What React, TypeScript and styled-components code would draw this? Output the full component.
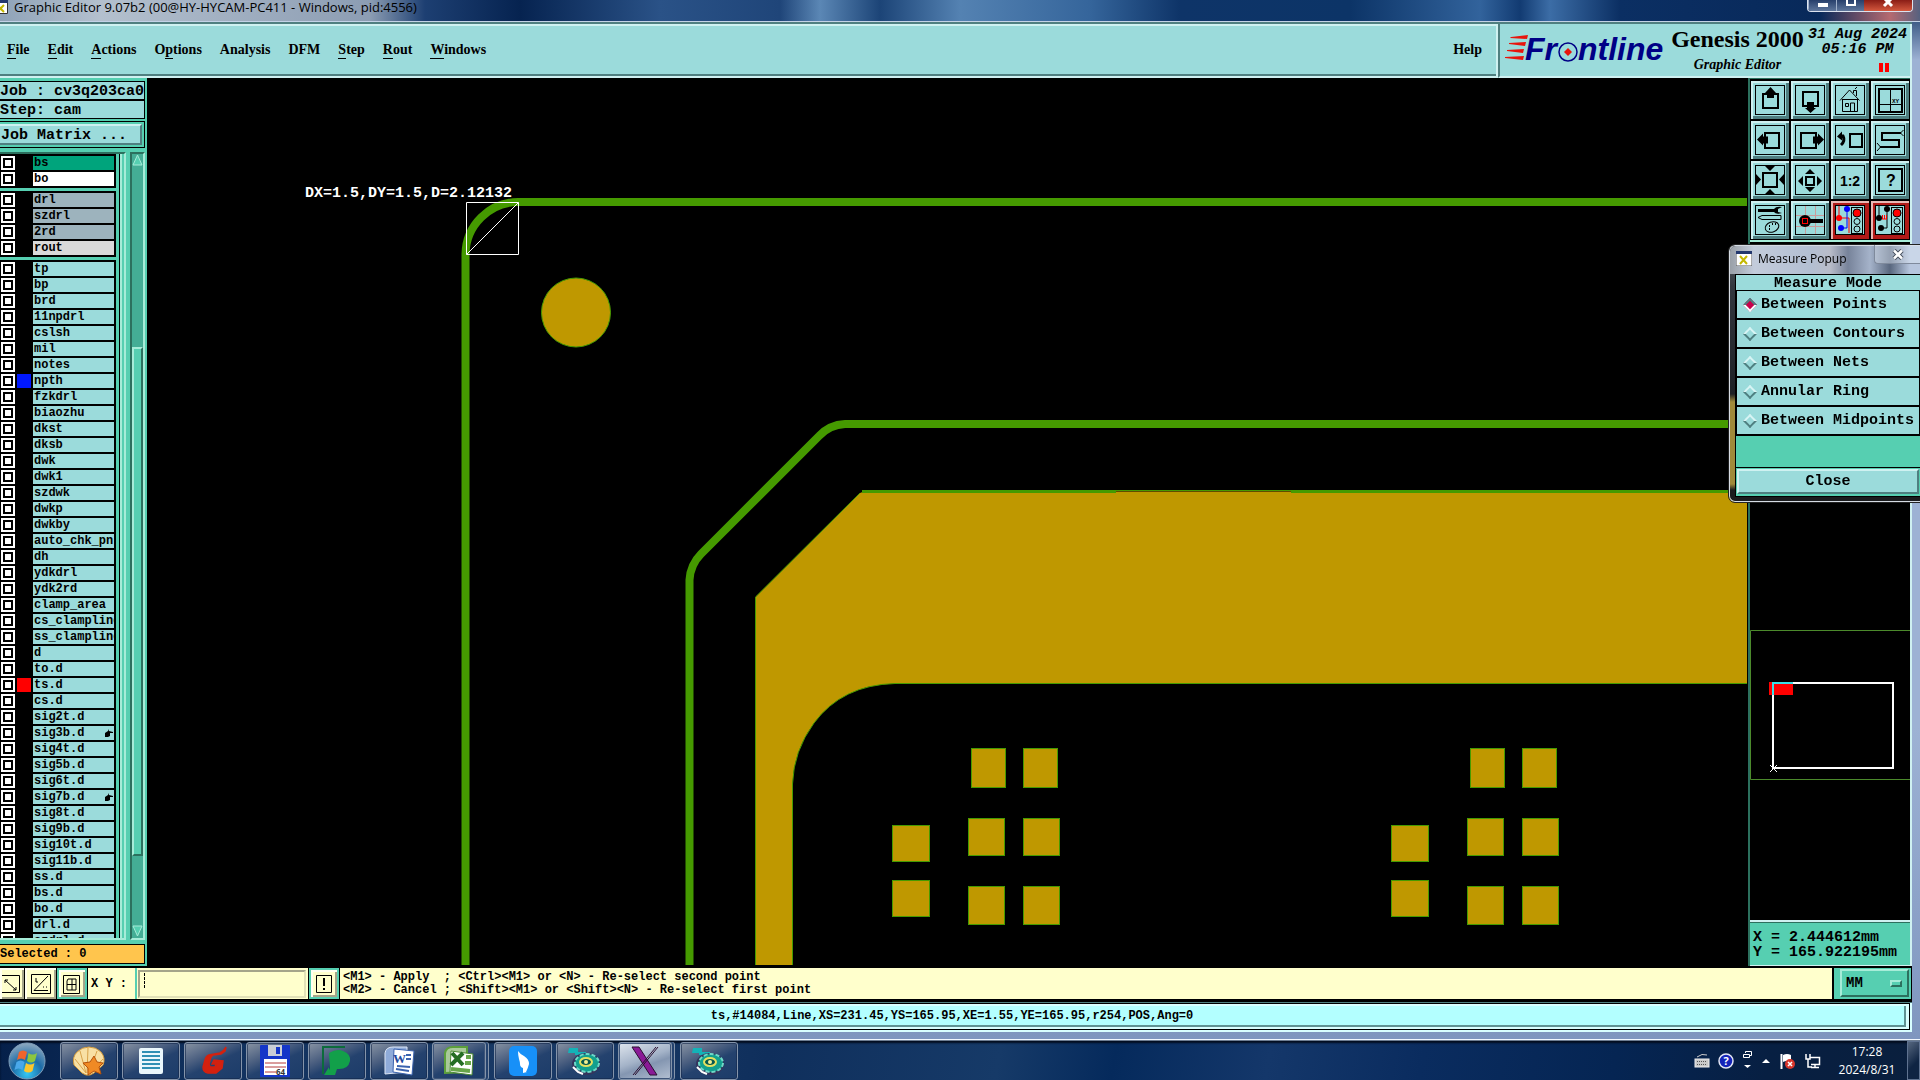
import React, { useState } from "react";
import styled, { createGlobalStyle, css } from "styled-components";

const MONO = '"Liberation Mono", "Courier New", monospace';
const SERIF = '"Liberation Serif", "Times New Roman", serif';
const UI = '"Open Sans", "Noto Sans", sans-serif';

const c = {
  teal: "#56cfb1",
  tealLight: "#a6ecd8",
  tealDark: "#2c705e",
  trough: "#44ad95",
  pale: "#9bdbdb",
  paleLight: "#cff1f1",
  paleDark: "#4f7f80",
  cream: "#ffffcc",
  creamDark: "#a5a58a",
  green: "#459a00",
  gold: "#bf9800",
  navy: "#000086",
};

const Global = createGlobalStyle`
  * { box-sizing: border-box; }
  body { margin: 0; background: #000; overflow: hidden; }
  button, input, select { font: inherit; color: inherit; margin: 0; padding: 0; border: 0; border-radius: 0; }
`;

const bevel = (light: string, dark: string, w = 2) => css`
  border-style: solid;
  border-width: ${w}px;
  border-color: ${light} ${dark} ${dark} ${light};
`;

const Screen = styled.div`
  display: flex;
  flex-direction: column;
  height: 100vh;
  color: #000;
  font: bold 15px/18px ${MONO};
`;

/* ---------- window frame ---------- */
const Frame = styled.div`
  flex: 1;
  min-height: 0;
  display: flex;
  flex-direction: column;
  padding: 0 8px 7px 0;
  background: linear-gradient(180deg, #0a2c5c 0, #9db2d4 60px, #9db2d4 70%, #7f96bf 100%);
  border-bottom: 1px solid #f2f8ff;
`;

const TitleBar = styled.header`
  height: 22px;
  margin-right: -8px;
  display: flex;
  align-items: flex-start;
  gap: 6px;
  border-bottom: 1px solid #c4d2e6;
  background: linear-gradient(90deg, #8fa3b8 0, #b4c0ce 100px, #8c9db3 370px, #1d3f72 425px, #062350 520px,
    #2a5287 660px, #1f4579 780px, #5b87b5 820px, #1c4477 880px, #5482b2 960px, #35659b 1090px, #0e3468 1180px,
    #0c3467 1350px, #32639c 1480px, #123b72 1520px, #3c6da6 1550px, #0b2f63 1620px, #08295a 1820px, #b56a70 1890px, #56617f 100%);
`;

const WindowTitle = styled.h1`
  flex: 1;
  margin: 0;
  font: 13px/14px ${UI};
`;

const Caption = styled.div`
  display: flex;
  height: 12px;
  margin-right: 7px;
  border: 1px solid #dbe3ef;
  border-top: 0;
  border-radius: 0 0 4px 4px;
  overflow: hidden;
`;

const CaptionButton = styled.button<{ $danger?: boolean }>`
  display: flex;
  justify-content: center;
  width: ${(p) => (p.$danger ? 48 : 28)}px;
  background: ${(p) => (p.$danger ? "linear-gradient(#8a1d16,#d4583e)" : "linear-gradient(#273f6b,#5e769c)")};
  border-left: ${(p) => (p.$danger ? 0 : 1)}px solid #9fb0cb;
`;

const Client = styled.main`
  flex: 1;
  min-height: 0;
  display: flex;
  flex-direction: column;
  background: #000;
`;

/* ---------- menu ---------- */
const TopRow = styled.div`
  display: flex;
  height: 56px;
  background: ${c.paleDark};
  padding-top: 2px;
`;

const MenuBar = styled.nav`
  flex: 1;
  display: flex;
  align-items: center;
  gap: 18px;
  padding: 0 14px 2px 7px;
  background: ${c.pale};
  border-bottom: 2px solid ${c.paleLight};
  border-top: 2px solid ${c.paleLight};
  border-right: 2px solid ${c.paleDark};
  box-shadow: inset 0 -2px 0 ${c.paleDark};
  font: bold 14px/18px ${SERIF};
`;

const MenuItem = styled.button<{ $end?: boolean }>`
  background: none;
  white-space: nowrap;
  margin-left: ${(p) => (p.$end ? "auto" : 0)};
  u { text-decoration: none; border-bottom: 1px solid #000; padding-bottom: 1px; }
`;

const Brand = styled.section`
  width: 414px;
  display: flex;
  justify-content: space-between;
  padding: 0 3px 0 5px;
  background: ${c.pale};
  border-style: solid;
  border-width: 0 2px 2px;
  border-color: ${c.paleDark} ${c.paleLight} ${c.paleLight} ${c.paleDark};
  box-shadow: -2px 0 0 ${c.paleLight};
`;

const BrandText = styled.div`
  text-align: center;
  font: bold italic 14px/22px ${SERIF};
  white-space: nowrap;
`;

const Product = styled.div`
  font: bold 24px/30px ${SERIF};
`;

const Clock = styled.div`
  padding-top: 3px;
  text-align: center;
  font: italic bold 15px/15px ${MONO};
  white-space: nowrap;
`;

const Pause = styled.div`
  width: 10px;
  height: 9px;
  margin: 6px 18px 0 auto;
  border: solid #ff0000;
  border-width: 0 4px;
`;

/* ---------- layer panel ---------- */
const Work = styled.div`
  flex: 1;
  min-height: 0;
  display: flex;
`;

const LayerPanel = styled.aside`
  width: 147px;
  display: flex;
  flex-direction: column;
  background: ${c.teal};
  padding: 3px 2px 2px 0;
`;

const Info = styled.div`
  height: 19px;
  border: 1px solid #000;
  border-left: 0;
  background: ${c.pale};
  line-height: 19px;
  white-space: pre;
`;

const MatrixBox = styled.div`
  margin: 2px 0 4px;
  padding: 2px 2px 2px 0;
  border: 1px solid #000;
  border-left: 0;
`;

const MatrixButton = styled.button`
  display: block;
  width: 100%;
  height: 21px;
  text-align: left;
  background: ${c.pale};
  padding: 1px 0 0 1px;
  ${bevel(c.paleLight, c.paleDark)}
  border-left: 0;
`;

const ListArea = styled.div`
  flex: 1;
  min-height: 0;
  display: flex;
`;

const ListScroll = styled.div`
  width: 126px;
  overflow: hidden;
  border-top: 2px solid ${c.tealDark};
  border-bottom: 2px solid ${c.tealLight};
  border-right: 2px solid ${c.tealLight};
  margin-right: 4px;
`;

const ListBody = styled.div`
  width: 122px;
  padding-right: 2px;
  border-right: 2px solid ${c.tealLight};
  box-shadow: inset -1px 0 0 #000;
`;

const Group = styled.ul`
  list-style: none;
  margin: 0 0 3px;
  padding: 1px 2px 1px 1px;
  width: 116px;
  background: #000;
`;

const LayerRow = styled.li`
  display: flex;
  align-items: center;
  gap: 2px;
  height: 16px;
`;

const LayerCheck = styled.input`
  appearance: none;
  flex: none;
  width: 14px;
  height: 14px;
  background: #fff;
  border: 2px solid #fff;
  box-shadow: inset 0 0 0 2px #000;
`;

const Swatch = styled.span<{ $color?: string }>`
  flex: none;
  width: 14px;
  height: 14px;
  background: ${(p) => p.$color || "#000"};
`;

const LayerName = styled.label<{ $bg?: string }>`
  flex: 1;
  min-width: 0;
  display: flex;
  justify-content: space-between;
  align-items: center;
  height: 14px;
  padding-left: 1px;
  overflow: hidden;
  background: ${(p) => p.$bg || c.pale};
  font: bold 12px/14px ${MONO};
  white-space: nowrap;
`;

const ScrollBar = styled.div`
  width: 15px;
  display: flex;
  flex-direction: column;
  background: ${c.trough};
  border: 2px solid ${c.tealDark};
  border-right-color: ${c.tealLight};
  border-bottom-color: ${c.tealLight};
`;

const ScrollArrow = styled.button`
  height: 13px;
  display: flex;
  background: none;
`;

const ScrollThumb = styled.div`
  margin-top: 180px;
  height: 509px;
  background: ${c.teal};
  ${bevel(c.tealLight, c.tealDark)}
`;

const Spacer = styled.div`
  flex: 1;
`;

const Selected = styled.div`
  height: 20px;
  margin-top: 4px;
  border: 1px solid #000;
  border-left: 0;
  background: #ffc54d;
  font: bold 12px/18px ${MONO};
`;

/* ---------- canvas ---------- */
const Canvas = styled.section`
  flex: 1;
  min-width: 0;
  background: #000;
  svg { display: block; width: 100%; height: 100%; }
`;

/* ---------- right panel ---------- */
const ToolPanel = styled.aside`
  width: 164px;
  display: flex;
  flex-direction: column;
  border-left: 2px solid ${c.tealDark};
  border-right: 2px solid ${c.paleLight};
`;

const ToolGrid = styled.div`
  display: grid;
  grid-template-columns: repeat(4, 38px);
  gap: 2px;
  padding: 2px 1px 1px;
  background: #000;
  border-top: 1px solid ${c.tealDark};
  border-bottom: 2px solid ${c.tealLight};
`;

const ToolButton = styled.button<{ $hot?: boolean }>`
  width: 38px;
  height: 38px;
  background: ${c.pale};
  box-shadow: ${(p) =>
    p.$hot
      ? "inset 2px 2px 0 #e8b8b4, inset 0 0 0 4px #b01a18"
      : `inset 2px 2px 0 ${c.paleLight}, inset -3px -3px 0 ${c.paleDark}`};
  svg { display: block; }
`;

const ToolBlank = styled.div`
  height: 248px;
`;

const Overview = styled.div`
  flex: 1;
  display: flex;
  align-items: center;
  background: #000;
  border-bottom: 2px solid ${c.paleLight};
  svg { display: block; }
`;

const Coords = styled.output`
  height: 44px;
  padding: 7px 0 0 3px;
  background: ${c.teal};
  border-top: 1px solid ${c.tealDark};
  border-bottom: 1px solid ${c.paleLight};
  line-height: 15px;
  white-space: pre;
`;

/* ---------- command row ---------- */
const CommandRow = styled.form`
  display: flex;
  height: 36px;
  gap: 1px;
  padding: 2px 1px 3px 0;
  background: #000;
`;

const SnapButton = styled.button<{ $on?: boolean; $w: number }>`
  flex: none;
  width: ${(p) => p.$w}px;
  display: flex;
  align-items: center;
  justify-content: center;
  background: ${c.cream};
  ${(p) => (p.$on ? `border: 2px solid ${c.teal};` : "")}
  box-shadow: inset 2px 2px 0 #fffff0, inset -2px -2px 0 ${c.creamDark};
  svg { flex: none; }
`;

const CoordField = styled.div`
  flex: none;
  display: flex;
  align-items: stretch;
  width: 220px;
  background: ${c.cream};
  label {
    flex: none;
    width: 49px;
    padding-left: 3px;
    font: bold 12px/32px ${MONO};
    white-space: pre;
    border-right: 2px solid ${c.teal};
  }
`;

const CoordBox = styled.div`
  flex: 1;
  min-width: 0;
  display: flex;
  align-items: flex-start;
  gap: 2px;
  margin: 2px 2px 1px 1px;
  padding: 1px 0 0 4px;
  border: 2px solid ${c.creamDark};
  border-right-color: #e2e2b8;
  border-bottom-color: #e2e2b8;
  input {
    flex: 1;
    min-width: 0;
    background: ${c.cream};
    font: 15px/20px ${MONO};
    outline: 0;
  }
`;

const Caret = styled.span`
  height: 15px;
  border-left: 1px dashed #000;
`;

const Hint = styled.p`
  flex: 1;
  margin: 0;
  padding: 3px 0 0 3px;
  background: ${c.cream};
  font: bold 12px/13px ${MONO};
  white-space: pre;
`;

const UnitPanel = styled.div`
  width: 77px;
  margin-left: 1px;
  padding: 1px 2px 1px 6px;
  background: ${c.teal};
`;

const UnitBox = styled.div`
  display: flex;
  align-items: center;
  height: 28px;
  padding: 0 5px 0 4px;
  ${bevel(c.tealLight, c.tealDark)}
  select {
    flex: 1;
    min-width: 0;
    appearance: none;
    background: none;
    outline: 0;
    font: bold 14px/20px ${MONO};
  }
`;

const UnitMark = styled.span`
  width: 12px;
  height: 7px;
  ${bevel(c.tealLight, c.tealDark)}
`;

const Status = styled.footer`
  height: 30px;
  padding: 0 2px 2px 0;
  background: #d9ffff;
  border-top: 1px solid ${c.paleDark};
  div {
    height: 27px;
    border: 1px solid #000;
    border-left: 0;
    padding: 2px 3px 2px 0;
    background: #d9ffff;
  }
  p {
    margin: 0;
    height: 21px;
    background: #b3ffff;
    border: solid #5f9293;
    border-width: 0 2px 2px 0;
    text-align: center;
    font: bold 12px/20px ${MONO};
  }
`;

/* ---------- popup ---------- */
const Popup = styled.section`
  position: fixed;
  top: 245px;
  right: 0;
  width: 191px;
  padding-left: 5px;
  padding-bottom: 4px;
  border: 1px solid #d5dbe3;
  border-right: 0;
  border-radius: 6px 0 0 6px;
  outline: 1px solid #222;
  background: linear-gradient(180deg, #5e6269 0, #33383f 40px, #1e2125 148px, #a08a3a 156px, #a08a3a 238px, #1b1c1e 244px);
`;

const PopupTitle = styled.header`
  display: flex;
  align-items: flex-start;
  height: 28px;
  margin-left: -5px;
  padding: 5px 0 0 6px;
  gap: 6px;
  border-radius: 6px 0 0 0;
  background: linear-gradient(90deg, #9aa0a8 0, #c3ccdb 24px, #b3bfd2 80px, #b9bcc9 100px, #77839a 118px, #a5b3ca 140px, #59677e 160px, #b7c6de 180px);
  h2 { flex: 1; margin: 0; font: 12px/16px ${UI}; white-space: nowrap; }
`;

const PopupClose = styled.button`
  width: 46px;
  height: 19px;
  margin-top: -6px;
  display: flex;
  align-items: center;
  justify-content: center;
  background: rgba(225, 233, 245, 0.45);
  border: 1px solid #7f8a9c;
  border-width: 0 0 1px 1px;
  border-radius: 0 0 0 4px;
`;

const PopupBody = styled.fieldset`
  margin: 0;
  padding: 0;
  min-width: 0;
  background: #000;
  border: solid #000;
  border-width: 1px 0 1px 1px;
`;

const ModeTitle = styled.div`
  height: 15px;
  line-height: 18px;
  text-align: center;
  background: ${c.pale};
  margin-bottom: 1px;
`;

const Mode = styled.label`
  display: flex;
  align-items: center;
  gap: 6px;
  height: 27px;
  padding: 1px 0 0 8px;
  margin: 0 1px 2px;
  background: ${c.pale};
  white-space: nowrap;
  input {
    appearance: none;
    flex: none;
    width: 10px;
    height: 10px;
    border: 2px solid;
    border-color: #d8f4f4 ${c.paleDark} ${c.paleDark} #d8f4f4;
    transform: rotate(45deg);
    outline: 0;
  }
  input:checked {
    background: #c8004b;
    border-color: ${c.paleDark} #f4ffff #f4ffff ${c.paleDark};
  }
`;

const PopupGap = styled.div`
  height: 31px;
  background: ${c.teal};
`;

const CloseBox = styled.div`
  padding: 1px 1px 2px 1px;
  margin-top: 1px;
  background: ${c.teal};
  button {
    width: 100%;
    height: 25px;
    background: ${c.pale};
    ${bevel(c.paleLight, c.paleDark)}
  }
`;

/* ---------- taskbar ---------- */
const TaskBar = styled.footer`
  display: flex;
  align-items: center;
  height: 40px;
  padding-left: 8px;
  border-top: 1px solid #6d7d92;
  background: linear-gradient(100deg, #05204a 0, #12325f 12%, #1a3a66 30%, #0f2f5c 40%, #163a68 52%, #052a5c 58%,
    #14376a 66%, #0a2c5f 74%, #052553 84%, #071f42 92%, #0a1f3d 100%);
  box-shadow: inset 0 2px 2px #030d1f;
`;

const Start = styled.button`
  width: 38px;
  height: 38px;
  margin-right: 14px;
  background: none;
`;

const Tasks = styled.div`
  display: flex;
  gap: 4px;
`;

const Task = styled.button<{ $active?: boolean; $stack?: boolean }>`
  display: flex;
  align-items: center;
  justify-content: center;
  width: ${(p) => (p.$stack ? 54 : 58)}px;
  margin-right: ${(p) => (p.$stack ? 4 : 0)}px;
  height: 38px;
  border: 1px solid #8494aa;
  border-radius: 3px;
  background: ${(p) =>
    p.$active
      ? "linear-gradient(160deg,#dfe6ee 0,#a4b3c8 45%,#8496b1 60%,#b3c0d2 100%)"
      : "linear-gradient(155deg,#8893a3 0,#4b5f80 35%,#24426e 55%,#1c3c69 100%)"};
  box-shadow: ${(p) => (p.$stack ? "2px 0 0 #24426e, 3px 0 0 #8494aa, inset 0 0 0 1px #3d5478" : "inset 0 0 0 1px rgba(20,40,75,.6)")};
`;

const Tray = styled.div`
  display: flex;
  align-items: center;
  gap: 8px;
  margin-left: auto;
`;

const TrayClock = styled.time`
  width: 76px;
  text-align: center;
  color: #fff;
  font: 12px/18px ${UI};
`;

const ShowDesktop = styled.button`
  width: 13px;
  height: 39px;
  margin-left: -6px;
  border: 1px solid #5f7290;
  background: linear-gradient(135deg, #56677f, #0f2443 60%);
`;

/* ---------- drawings ---------- */
const K = "#000";

function Lights() {
  return (
    <g fill="none" stroke={K}>
      <rect x="20.500" y="6.500" width="11" height="26" />
      <circle cx="26" cy="12" r="4" fill="red" />
      <circle cx="26" cy="20.500" r="3" />
      <circle cx="26" cy="28" r="3" />
    </g>
  );
}

const toolIcons: { name: string; hot?: boolean; art: React.ReactNode }[] = [
  { name: "Pan up", art: <><rect x="12" y="13" width="15" height="14" fill="none" stroke={K} strokeWidth="2" /><path d="M19.500 6l5.500 6h-2v5h-7v-5h-2z" /></> },
  { name: "Pan down", art: <><rect x="12" y="11" width="15" height="14" fill="none" stroke={K} strokeWidth="2" /><path d="M16 21h7v6h2l-5.500 5-5.500-5h2z" /></> },
  { name: "Home", art: <><path d="M9 19.500L18.500 9l10 10.500M11.500 18v12.500h15V18M11 18.500h16M14.500 22.500h3v3h-3zM19.500 30v-8h4v8M22.500 12V9.500h3V15M24 8l2-2" fill="none" stroke={K} /></> },
  { name: "Window XY", art: <><rect x="8" y="8" width="23" height="23" fill="none" stroke={K} strokeWidth="2" /><path d="M19.500 8v23M8 23.500h23" stroke={K} /><text x="21" y="22" fontSize="6" fontFamily={MONO}>XY</text></> },
  { name: "Pan left", art: <><rect x="14" y="12" width="14" height="15" fill="none" stroke={K} strokeWidth="2" /><path d="M6 18.500l6-6v3h5v7h-5v2z" /></> },
  { name: "Pan right", art: <><rect x="10" y="12" width="15" height="15" fill="none" stroke={K} strokeWidth="2" /><path d="M33 18.500l-6-6v3h-5v7h5v2z" /></> },
  { name: "Previous", art: <><rect x="19" y="13" width="12" height="13" fill="none" stroke={K} strokeWidth="2" /><path d="M9 15h3q2.500 5-2 9" fill="none" stroke={K} strokeWidth="3" /><path d="M6 15.500l5-5v9z" /></> },
  { name: "Serpentine", art: <><path d="M30 12H11v7h17v7H9" fill="none" stroke={K} strokeWidth="2" /><path d="M32.500 9l-3 3 3 3M6 22l3.500 4L6 30" fill="none" stroke={K} /></> },
  { name: "Zoom in", art: <><rect x="12" y="12" width="14" height="14" fill="none" stroke={K} strokeWidth="2" /><path d="M14 5h10l-5 5zM14 33h10l-5-5zM5 13v11l5-5.500zM33 13v11l-5-5.500z" /></> },
  { name: "Zoom out", art: <><rect x="15" y="16" width="8" height="8" fill="none" stroke={K} strokeWidth="2" /><path d="M14 13h10l-5-5zM14 26h10l-5 5zM12 15v10l-5-5zM26 15v10l5-5z" /></> },
  { name: "Zoom 1:2", art: <text x="19" y="25" textAnchor="middle" fontSize="14" fontWeight="bold" fontFamily='"Liberation Sans", sans-serif'>1:2</text> },
  { name: "Query", art: <><rect x="8" y="8" width="23" height="22" fill="none" stroke={K} strokeWidth="2" /><text x="20" y="25" textAnchor="middle" fontSize="16" fontWeight="bold" fontFamily='"Liberation Sans", sans-serif'>?</text></> },
  { name: "Tools", art: <><path d="M7 8h16q2-3 8-2l-4 2v3l4 1q-6 2-8-1H7z" /><path d="M7 16.500l4-2h19v4H11z" fill="none" stroke={K} /><ellipse cx="21" cy="26" rx="7" ry="5" transform="rotate(-20 21 26)" fill="none" stroke={K} /><path d="M18 25h1M21 23h1M24 23h1M18 28h1" stroke={K} strokeWidth="2" /></> },
  { name: "Snap", art: <><path d="M5 14.500h28M5 25.500h28M14.500 5v28M24.500 5v28" stroke="#c99a9a" /><circle cx="14" cy="20" r="6" /><path d="M19 18h13v4H19z" /><rect x="11.500" y="17.500" width="5" height="5" fill="none" stroke="red" /></> },
  { name: "Run nets", hot: true, art: <><path d="M8 5v12h10v15" fill="none" stroke="red" /><path d="M16 8v19h-6" fill="none" stroke="#00f" /><circle cx="8" cy="17" r="3" fill="red" /><circle cx="16" cy="8" r="3" fill="#00f" /><circle cx="10" cy="27" r="3" fill="#00f" /><Lights /></> },
  { name: "Stop nets", hot: true, art: <><path d="M8 5v12M16 8v19h-6" fill="none" stroke={K} /><circle cx="8" cy="17" r="3" /><circle cx="16" cy="8" r="3" /><circle cx="10" cy="27" r="3" /><path d="M11 18h5M11.500 14v4M13.500 14v4M15.500 14v4" stroke="red" fill="none" /><Lights /></> },
];

function Logo() {
  return (
    <svg width="162" height="46" viewBox="0 0 162 46" role="img" aria-label="Frontline">
      <path d="M6 13l17-2-1 4-17-1zM4 19l17-1-1 4-16-2zM2 26l17-1-1 4-16-2zM0 33l19-1-1 4-18-2z" fill="#e8140c" />
      <g fontFamily='"Liberation Sans", Arial, sans-serif' fontStyle="italic" fontWeight="bold" fontSize="32" fill={c.navy}>
        <text x="20" y="36">Fr</text>
        <text x="73" y="36">ntline</text>
      </g>
      <circle cx="63" cy="28" r="9" fill="none" stroke={c.navy} strokeWidth="1.500" />
      <path d="M63 24l4 4-4 4-4-4z" fill="#e8140c" />
    </svg>
  );
}

const pads = [
  [971, 748, 35, 40], [1023, 748, 35, 40],
  [968, 818, 37, 38], [1023, 818, 37, 38],
  [968, 886, 37, 39], [1023, 886, 37, 39],
  [892, 825, 38, 37], [892, 880, 38, 37],
];

function Board() {
  const inner = "M1747 683.500H895Q842 685 814 723Q793.500 751 792.500 784V965";
  return (
    <svg viewBox="147 78 1601 888" preserveAspectRatio="xMinYMin meet" role="img" aria-label="Board layout">
      <path d="M465.500 965V254A53 53 0 0 1 518 202H1747" fill="none" stroke={c.green} strokeWidth="8" />
      <path d="M689.500 965V580A40 40 0 0 1 701 554L819 436A38 38 0 0 1 845 424H1747" fill="none" stroke={c.green} strokeWidth="8" />
      <path d={`M755.500 965V597L860 493Q862 491.500 866 491.500H1747V683.500${inner.slice(10)}Z`} fill={c.gold} />
      <path d="M755.500 965V597L860 493" fill="none" stroke={c.green} />
      <path d={inner} fill="none" stroke={c.green} />
      <path d="M862 491.500H1116M1291 491.500H1747" stroke={c.green} strokeWidth="3" />
      <path d="M1116 490.500H1291" stroke={c.green} />
      <circle cx="576" cy="312.500" r="34.500" fill={c.gold} stroke={c.green} />
      {[0, 499].map((dx) =>
        pads.map(([x, y, w, h]) => (
          <rect key={`${dx}-${x}-${y}`} x={x + dx + 0.5} y={y + 0.5} width={w - 1} height={h - 1} fill={c.gold} stroke={c.green} />
        ))
      )}
      <path d="M466.500 254.500V202.500H518.500V254.500ZL518.500 202.500" fill="none" stroke="#fff" />
      <text x="305" y="197" fill="#fff" fontFamily={MONO} fontWeight="bold" fontSize="15">DX=1.5,DY=1.5,D=2.12132</text>
    </svg>
  );
}

function OverviewMap() {
  return (
    <svg width="160" height="150" viewBox="0 0 160 150" role="img" aria-label="Overview">
      <path d="M160 .5H.5v149H160" fill="none" stroke="#4c8a2c" />
      <rect x="19" y="52" width="24" height="13" fill="red" />
      <rect x="23" y="53" width="120" height="85" fill="none" stroke="#fff" strokeWidth="2" />
      <path d="M43 53H23v12" fill="none" stroke="#38e0e8" strokeWidth="2" />
      <path d="M20 135l7 7M27 135l-7 7" stroke="#fff" />
    </svg>
  );
}

const XMark = () => (
  <svg width="12" height="11" viewBox="0 0 12 11">
    <path d="M2 1.500l8 8M10 1.500l-8 8" stroke="#3f4756" strokeWidth="4.500" />
    <path d="M2 1.500l8 8M10 1.500l-8 8" stroke="#fff" strokeWidth="2.500" />
  </svg>
);

const Hand = () => (
  <svg width="10" height="10" viewBox="0 0 10 10">
    <path d="M1 5l3-2 1-2v2l4 1v1H6v3L4 9H1z" />
  </svg>
);

const PixelReel = () => (
  <svg width="36" height="32" viewBox="0 0 36 32">
    <path d="M2 3h9v4h8v3H8V8H1z" fill="#13b3b8" />
    <ellipse cx="19" cy="19" rx="14" ry="11" fill="#35345c" />
    <ellipse cx="20" cy="18" rx="12" ry="9" fill="#12a08e" stroke="#6fd8c8" strokeWidth="2" strokeDasharray="4 2" />
    <ellipse cx="19" cy="17" rx="6" ry="4" fill="#08594f" stroke="#e4e160" strokeWidth="2" />
    <circle cx="19" cy="17" r="2" fill="#f4f090" />
    <path d="M6 22l5 5 5 2" stroke="#fff" strokeWidth="2" fill="none" />
  </svg>
);

const tasks: { name: string; active?: boolean; stack?: boolean; art: React.ReactNode }[] = [
  { name: "Shell", art: <svg width="34" height="32" viewBox="0 0 34 32"><path d="M10 28L2 20Q0 12 5 7q5-5 12-5t12 5q5 6 2 13l-9 8-4 2h-4z" fill="#f8e0a4" stroke="#d29a3c" /><path d="M14 28L3 14M14 28L8 6M15 28L16 3M17 28l8-22M18 28l13-14" stroke="#d8a24a" /><path d="M22 11l3 6 6 1-4 4 2 7-7-3-6 4 0-7-5-5 7-1z" fill="#f08a24" stroke="#b4520c" /></svg> },
  { name: "Notepad", art: <svg width="26" height="28" viewBox="0 0 26 28"><rect x="1" y="1" width="24" height="26" rx="2" fill="#eaf7fc" /><path d="M4 5h18M4 9h18M4 13h18M4 17h18M4 21h18" stroke="#2f8fb4" strokeWidth="2" /></svg> },
  { name: "Genesis", art: <svg width="30" height="30" viewBox="0 0 30 30"><path d="M28 1q-2 4-6 6l-11 2q-3 1-4 5l-2 7q0 5 5 6h8l6-5 1-7-9-1-2 4h4l-1 3h-5l-1-3 2-7 2-2 8-1 4-3z" fill="#d3210f" stroke="#d3210f" strokeWidth="1.500" /></svg> },
  { name: "Disk", art: <svg width="32" height="32" viewBox="0 0 32 32"><rect x="1" y="0" width="30" height="32" rx="1" fill="#1436c8" /><rect x="9" y="0" width="14" height="11" fill="#c9ced6" /><rect x="17" y="2" width="4" height="7" fill="#1436c8" /><rect x="5" y="14" width="23" height="16" fill="#fff" /><path d="M6 18h21M6 22h21M6 27h11" stroke="#b43a3a" /><text x="17" y="30" fontSize="8" fontFamily={UI} fontWeight="bold" fill="#333">64</text></svg> },
  { name: "Project", art: <svg width="32" height="32" viewBox="0 0 32 32"><path d="M2 29V2h22" fill="none" stroke="#0c6b3c" strokeWidth="2" /><path d="M8 8q8-5 14-2 8 3 7 10-2 9-13 8l-2 6H6l3-7z" fill="#12a04a" /><path d="M3 30l5-8v8z" fill="#12a04a" /></svg> },
  { name: "Word", art: <svg width="32" height="32" viewBox="0 0 32 32"><path d="M2 29V8Q3 2 10 2h14v25z" fill="#8fabd9" stroke="#dfe8f6" /><path d="M11 4l20 2-2 24-19-3z" fill="#fff" stroke="#3b63ae" /><text x="10" y="18" fontSize="13" fontFamily={SERIF} fontWeight="bold" fill="#1f4a9e">W</text><path d="M23 10h5M23 14h5M14 21l13 1M13 24l13 2" stroke="#3b63ae" strokeWidth="2" /></svg> },
  { name: "Excel", stack: true, art: <svg width="32" height="32" viewBox="0 0 32 32"><path d="M2 28V8Q3 2 10 2h14v25z" fill="#a9c99a" stroke="#5c9f3b" strokeWidth="2" /><path d="M8 6l22 3-1 21-22-3z" fill="#fff" stroke="#4b8a34" /><path d="M9 8l11 12M20 8L8 20" stroke="#256d24" strokeWidth="4" /><path d="M23 12h5M22 18h6M8 24l19 2" stroke="#67a549" strokeWidth="4" /></svg> },
  { name: "Bird", art: <svg width="28" height="30" viewBox="0 0 28 30"><rect width="28" height="30" rx="5" fill="#1790f8" /><path d="M9 5q2 3 6 5 5 3 5 8-1 4-3 8l1 0-4 1 0-5q-3-1-3-4 0-2-1-5-1-4-1-8z" fill="#fff" /></svg> },
  { name: "Engineering toolkit", art: <PixelReel /> },
  { name: "X server", active: true, stack: true, art: <svg width="34" height="32" viewBox="0 0 34 32"><path d="M4 2h7l18 28h-7z" fill="#8a1a96" stroke="#2b1030" /><path d="M28 2L5 30M30 2L7 30" stroke="#2b1030" /></svg> },
  { name: "Graphic Editor", art: <PixelReel /> },
];

/* ---------- data ---------- */
type Layer = { name: string; bg?: string; swatch?: string; hand?: boolean };

const groups: Layer[][] = [
  [{ name: "bs", bg: "#00a47c" }, { name: "bo", bg: "#ffffff" }],
  [{ name: "drl", bg: "#9db3bd" }, { name: "szdrl", bg: "#9db3bd" }, { name: "2rd", bg: "#9db3bd" }, { name: "rout", bg: "#d9d9d9" }],
  [
    ..."tp bp brd 11npdrl cslsh mil notes npth fzkdrl biaozhu dkst dksb dwk dwk1 szdwk dwkp dwkby auto_chk_pnl dh ydkdrl ydk2rd clamp_area cs_clampline ss_clampline d to.d ts.d cs.d sig2t.d sig3b.d sig4t.d sig5b.d sig6t.d sig7b.d sig8t.d sig9b.d sig10t.d sig11b.d ss.d bs.d bo.d drl.d szdrl.d"
      .split(" ")
      .map((name) => ({
        name,
        swatch: name === "npth" ? "#0018ff" : name === "ts.d" ? "#ff0000" : undefined,
        hand: name === "sig3b.d" || name === "sig7b.d",
      })),
  ],
];

const menus: [string, string, string][] = [
  ["", "F", "ile"], ["", "E", "dit"], ["", "A", "ctions"], ["O", "p", "tions"], ["Analysis", "", ""],
  ["DFM", "", ""], ["", "S", "tep"], ["", "R", "out"], ["", "W", "indows"],
];

const modes = ["Between Points", "Between Contours", "Between Nets", "Annular Ring", "Between Midpoints"];

export default function App() {
  const [mode, setMode] = useState(modes[0]);
  return (
    <Screen>
      <Global />
      <Frame>
        <TitleBar>
          <svg width="8" height="14" viewBox="0 0 8 14"><path d="M0 0h7.500v13.500H0" fill="#fff" stroke="#333" /><path d="M0 0h8v3H0z" fill="#23386e" /><path d="M-3 5l7 7M4 5l-7 7" stroke="#c4b800" strokeWidth="2" /></svg>
          <WindowTitle>Graphic Editor 9.07b2 (00@HY-HYCAM-PC411 - Windows, pid:4556)</WindowTitle>
          <Caption>
            <CaptionButton aria-label="Minimize"><svg width="12" height="8"><rect x="1" y="3" width="10" height="4" fill="#fff" /></svg></CaptionButton>
            <CaptionButton aria-label="Restore"><svg width="12" height="8"><rect x="2" y="-2" width="8" height="7" fill="none" stroke="#fff" strokeWidth="2" /></svg></CaptionButton>
            <CaptionButton aria-label="Close window" $danger><svg width="12" height="8"><path d="M2-2l8 8M10-2L2 6" stroke="#fff" strokeWidth="3" /></svg></CaptionButton>
          </Caption>
        </TitleBar>
        <Client>
          <TopRow>
            <MenuBar>
              {menus.map(([a, u, b]) => (
                <MenuItem key={a + u + b} type="button">{a}{u && <u>{u}</u>}{b}</MenuItem>
              ))}
              <MenuItem type="button" $end>Help</MenuItem>
            </MenuBar>
            <Brand>
              <Logo />
              <BrandText><Product>Genesis 2000</Product>Graphic Editor</BrandText>
              <Clock>31 Aug 2024<br />05:16 PM<Pause /></Clock>
            </Brand>
          </TopRow>
          <Work>
            <LayerPanel>
              <Info>Job : cv3q203ca0</Info>
              <Info>Step: cam</Info>
              <MatrixBox><MatrixButton type="button">Job Matrix ...</MatrixButton></MatrixBox>
              <ListArea>
                <ListScroll>
                  <ListBody>
                    {groups.map((g, i) => (
                      <Group key={i}>
                        {g.map((l) => (
                          <LayerRow key={l.name}>
                            <LayerCheck type="checkbox" id={`layer-${l.name}`} />
                            <Swatch $color={l.swatch} />
                            <LayerName htmlFor={`layer-${l.name}`} $bg={l.bg}>{l.name}{l.hand && <Hand />}</LayerName>
                          </LayerRow>
                        ))}
                      </Group>
                    ))}
                  </ListBody>
                </ListScroll>
                <ScrollBar>
                  <ScrollArrow type="button" aria-label="Scroll up"><svg width="11" height="12"><path d="M5.500 1L10 11H1z" fill={c.teal} stroke={c.tealLight} /></svg></ScrollArrow>
                  <ScrollThumb />
                  <Spacer />
                  <ScrollArrow type="button" aria-label="Scroll down"><svg width="11" height="12"><path d="M5.500 11L10 1H1z" fill={c.teal} stroke={c.tealLight} /></svg></ScrollArrow>
                </ScrollBar>
              </ListArea>
              <Selected>Selected : 0</Selected>
            </LayerPanel>
            <Canvas><Board /></Canvas>
            <ToolPanel>
              <ToolGrid>
                {toolIcons.map((t) => (
                  <ToolButton key={t.name} type="button" aria-label={t.name} $hot={t.hot}>
                    <svg width="38" height="38" viewBox="0 0 38 38">
                      <rect x="4.500" y="4.500" width="29" height="29" fill={c.pale} stroke={K} />
                      {t.art}
                    </svg>
                  </ToolButton>
                ))}
              </ToolGrid>
              <ToolBlank />
              <Overview><OverviewMap /></Overview>
              <Coords>{"X = 2.444612mm\nY = 165.922195mm"}</Coords>
            </ToolPanel>
          </Work>
          <CommandRow onSubmit={(e) => e.preventDefault()}>
            <SnapButton type="button" aria-label="Line snap" $w={24}><svg width="20" height="20"><path d="M0 1.500h17.500v17H0M3 6l11 10M3 6v3M3 6h3M14 16v-3M14 16h-3" fill="none" stroke={K} /></svg></SnapButton>
            <SnapButton type="button" aria-label="Angle snap" $w={31}><svg width="22" height="22"><path d="M1.500 1.500h19v19h-19zM18 3L4 17.500h14M6 5v4h2M13 14h1M16 14h1" fill="none" stroke={K} /></svg></SnapButton>
            <SnapButton type="button" aria-label="Grid snap" $w={30} $on><svg width="20" height="22"><path d="M1.500 2.500h16v18h-16zM6 6h8v11H5v-9zM10 6v11M5 11.500h9" fill="none" stroke={K} /></svg></SnapButton>
            <CoordField>
              <label htmlFor="xy">X Y :</label>
              <CoordBox><Caret /><input id="xy" /></CoordBox>
            </CoordField>
            <SnapButton type="button" aria-label="Alert" $w={30} $on><svg width="20" height="22"><path d="M2.500 2.500h15v17h-15z" fill="none" stroke={K} /><path d="M10 5v8M10 15v2" stroke={K} strokeWidth="2" /></svg></SnapButton>
            <Hint>{"<M1> - Apply  ; <Ctrl><M1> or <N> - Re-select second point\n<M2> - Cancel ; <Shift><M1> or <Shift><N> - Re-select first point"}</Hint>
            <UnitPanel>
              <UnitBox>
                <select aria-label="Units" defaultValue="MM"><option>MM</option><option>INCH</option></select>
                <UnitMark />
              </UnitBox>
            </UnitPanel>
          </CommandRow>
          <Status><div><p>ts,#14084,Line,XS=231.45,YS=165.95,XE=1.55,YE=165.95,r254,POS,Ang=0</p></div></Status>
        </Client>
      </Frame>

      <Popup aria-label="Measure Popup">
        <PopupTitle>
          <svg width="16" height="15"><rect width="16" height="15" fill="#fff" stroke="#555" /><rect width="16" height="3" fill="#23386e" /><path d="M4 5l7 8M11 5l-7 8" stroke="#c4b800" strokeWidth="2" /></svg>
          <h2>Measure Popup</h2>
          <PopupClose type="button" aria-label="Close popup window"><XMark /></PopupClose>
        </PopupTitle>
        <PopupBody>
          <ModeTitle>Measure Mode</ModeTitle>
          {modes.map((m) => (
            <Mode key={m}>
              <input type="radio" name="mode" checked={mode === m} onChange={() => setMode(m)} />
              {m}
            </Mode>
          ))}
          <PopupGap />
          <CloseBox><button type="button">Close</button></CloseBox>
        </PopupBody>
      </Popup>

      <TaskBar>
        <Start aria-label="Start">
          <svg width="38" height="38" viewBox="0 0 38 38">
            <defs>
              <radialGradient id="orb" cx="50%" cy="85%" r="85%">
                <stop offset="0" stopColor="#35c8f4" /><stop offset=".5" stopColor="#1c6ca8" /><stop offset="1" stopColor="#8fa9bf" />
              </radialGradient>
            </defs>
            <circle cx="19" cy="19" r="18" fill="url(#orb)" stroke="#7f9db8" />
            <path d="M11 10q4-3 8 0l-2 8q-4-3-8 0z" fill="#f0642c" />
            <path d="M20.500 11q4 3 8.500 0l-2 8q-4 3-8 0z" fill="#8cc63e" />
            <path d="M8.500 20q4-3 8 0l-2 8q-4-3-8 0z" fill="#4aa8ea" />
            <path d="M18 21q4 3 8.500 0l-2 8q-4 3-8.500 0z" fill="#fcc62c" />
          </svg>
        </Start>
        <Tasks>
          {tasks.map((t) => (
            <Task key={t.name} aria-label={t.name} $active={t.active} $stack={t.stack}>{t.art}</Task>
          ))}
        </Tasks>
        <Tray>
          <svg width="16" height="16" viewBox="0 0 16 16"><path d="M3 4q5-4 10-2" fill="none" stroke="#ccc" /><rect x="1" y="6" width="14" height="8" fill="#c9c9c9" stroke="#eee" /><path d="M3 8.500h10M3 11.500h10" stroke="#555" strokeDasharray="1 1" /></svg>
          <svg width="16" height="16" viewBox="0 0 16 16"><circle cx="8" cy="8" r="7" fill="#1424b8" stroke="#e3e6f4" strokeWidth="1.500" /><text x="8" y="12" textAnchor="middle" fontSize="11" fontWeight="bold" fontFamily={UI} fill="#fff">?</text></svg>
          <svg width="11" height="22" viewBox="0 0 11 22"><path d="M3.500 3V1.500h6v4H8M1.500 4.500h6v3h-6z" fill="none" stroke="#fff" /><path d="M2 15h7l-3.500 3z" fill="#fff" /></svg>
          <svg width="10" height="6" viewBox="0 0 10 6"><path d="M1 5l4-4 4 4z" fill="#fff" /></svg>
          <svg width="17" height="16" viewBox="0 0 17 16"><path d="M2.500 1v15" stroke="#fff" strokeWidth="2" /><path d="M4 2q4-2 8 0v7q-4-2-8 0z" fill="#fff" /><circle cx="11" cy="11" r="5" fill="#d8362c" /><path d="M9 9l4 4M13 9l-4 4" stroke="#fff" strokeWidth="1.500" /></svg>
          <svg width="17" height="16" viewBox="0 0 17 16"><path d="M6 4.500h9.500v7H7M11 12v2M7 14.500h8" fill="none" stroke="#fff" strokeWidth="1.500" /><path d="M2 1v5h4V1M4 6v8h4" fill="none" stroke="#fff" strokeWidth="1.500" /></svg>
          <TrayClock>17:28<br />2024/8/31</TrayClock>
          <ShowDesktop aria-label="Show desktop" />
        </Tray>
      </TaskBar>
    </Screen>
  );
}
